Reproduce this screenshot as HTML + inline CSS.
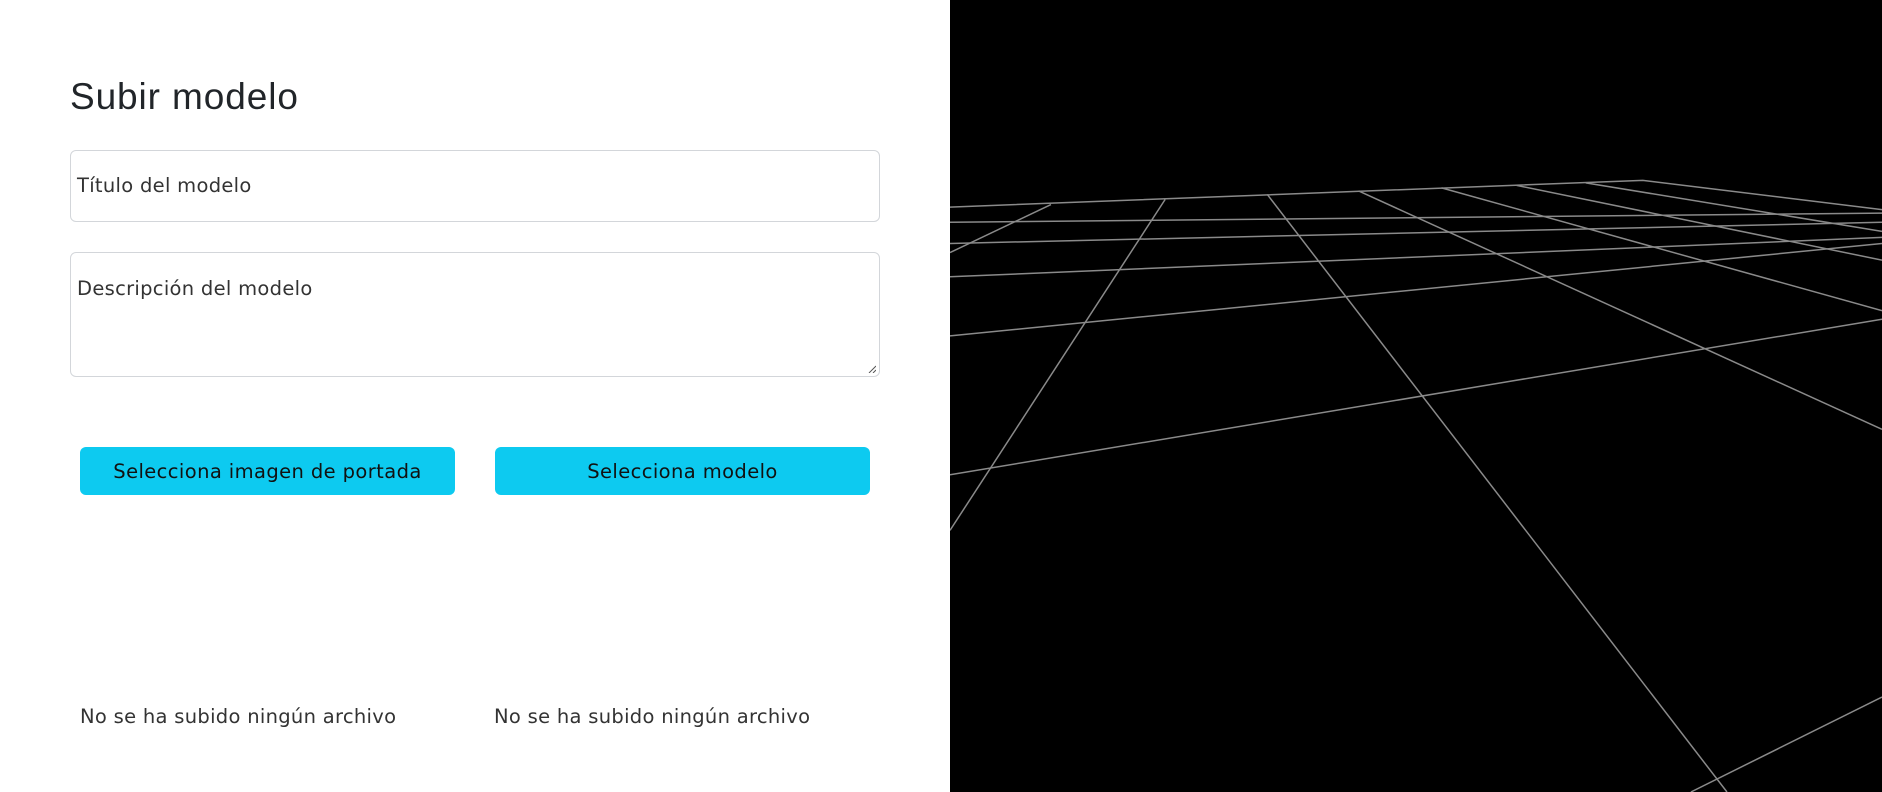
<!DOCTYPE html>
<html><head><meta charset="utf-8"><style>
*{box-sizing:border-box;margin:0;padding:0}
body{width:1882px;height:792px;background:#fff;position:relative;overflow:hidden;font-family:"DejaVu Sans","Liberation Sans",sans-serif;color:#212529}
h1{position:absolute;left:70px;top:76px;font-size:37px;font-weight:normal;letter-spacing:0.9px;font-family:"Liberation Sans",sans-serif}
.inp{position:absolute;left:70px;width:810px;border:1px solid #d3d6da;border-radius:6px;background:#fff}
.inp span{position:absolute;left:6px;font-size:19.5px;color:#333;letter-spacing:0.3px}
.btn{position:absolute;top:447px;height:48px;width:375px;background:#0dcaf0;border-radius:6px;font-size:19.5px;letter-spacing:0.4px;color:#111;display:flex;align-items:center;justify-content:center}
.nf{position:absolute;top:705px;font-size:19.5px;color:#333;letter-spacing:0.3px}
svg{position:absolute;left:950px;top:0}
</style></head><body>
<h1>Subir modelo</h1>
<div class="inp" style="top:150px;height:72px"><span style="top:23px">Título del modelo</span></div>
<div class="inp" style="top:252px;height:125px"><span style="top:24px">Descripción del modelo</span>
<svg style="left:auto;right:3px;top:auto;bottom:3px;position:absolute" width="8" height="8"><path d="M1 8L8 1M5 8L8 5" stroke="#555" stroke-width="1"/></svg></div>
<div class="btn" style="left:80px">Selecciona imagen de portada</div>
<div class="btn" style="left:495px">Selecciona modelo</div>
<div class="nf" style="left:80px">No se ha subido ningún archivo</div>
<div class="nf" style="left:494px">No se ha subido ningún archivo</div>
<svg width="932" height="792" viewBox="17 0 1551 1568" preserveAspectRatio="none">
<rect x="0" y="0" width="1600" height="1600" fill="#000"/>
<g stroke="#8a8a8a" stroke-width="1.5" fill="none">
<path vector-effect="non-scaling-stroke" d="M17 410L1170 357L1568 415"/>
<path vector-effect="non-scaling-stroke" d="M17 440L1568 422"/>
<path vector-effect="non-scaling-stroke" d="M17 482L1568 440"/>
<path vector-effect="non-scaling-stroke" d="M17 548L1568 470"/>
<path vector-effect="non-scaling-stroke" d="M17 665L1010 548L1568 482"/>
<path vector-effect="non-scaling-stroke" d="M17 940L1568 632"/>
<path vector-effect="non-scaling-stroke" d="M17 500L185 405"/>
<path vector-effect="non-scaling-stroke" d="M17 1050L375 395"/>
<path vector-effect="non-scaling-stroke" d="M1310 1568L545 385"/>
<path vector-effect="non-scaling-stroke" d="M1568 850L697 378"/>
<path vector-effect="non-scaling-stroke" d="M1568 615L835 372"/>
<path vector-effect="non-scaling-stroke" d="M1568 515L960 367"/>
<path vector-effect="non-scaling-stroke" d="M1568 458L1075 362"/>
<path vector-effect="non-scaling-stroke" d="M1250 1568L1568 1380"/>
</g></svg>
</body></html>
